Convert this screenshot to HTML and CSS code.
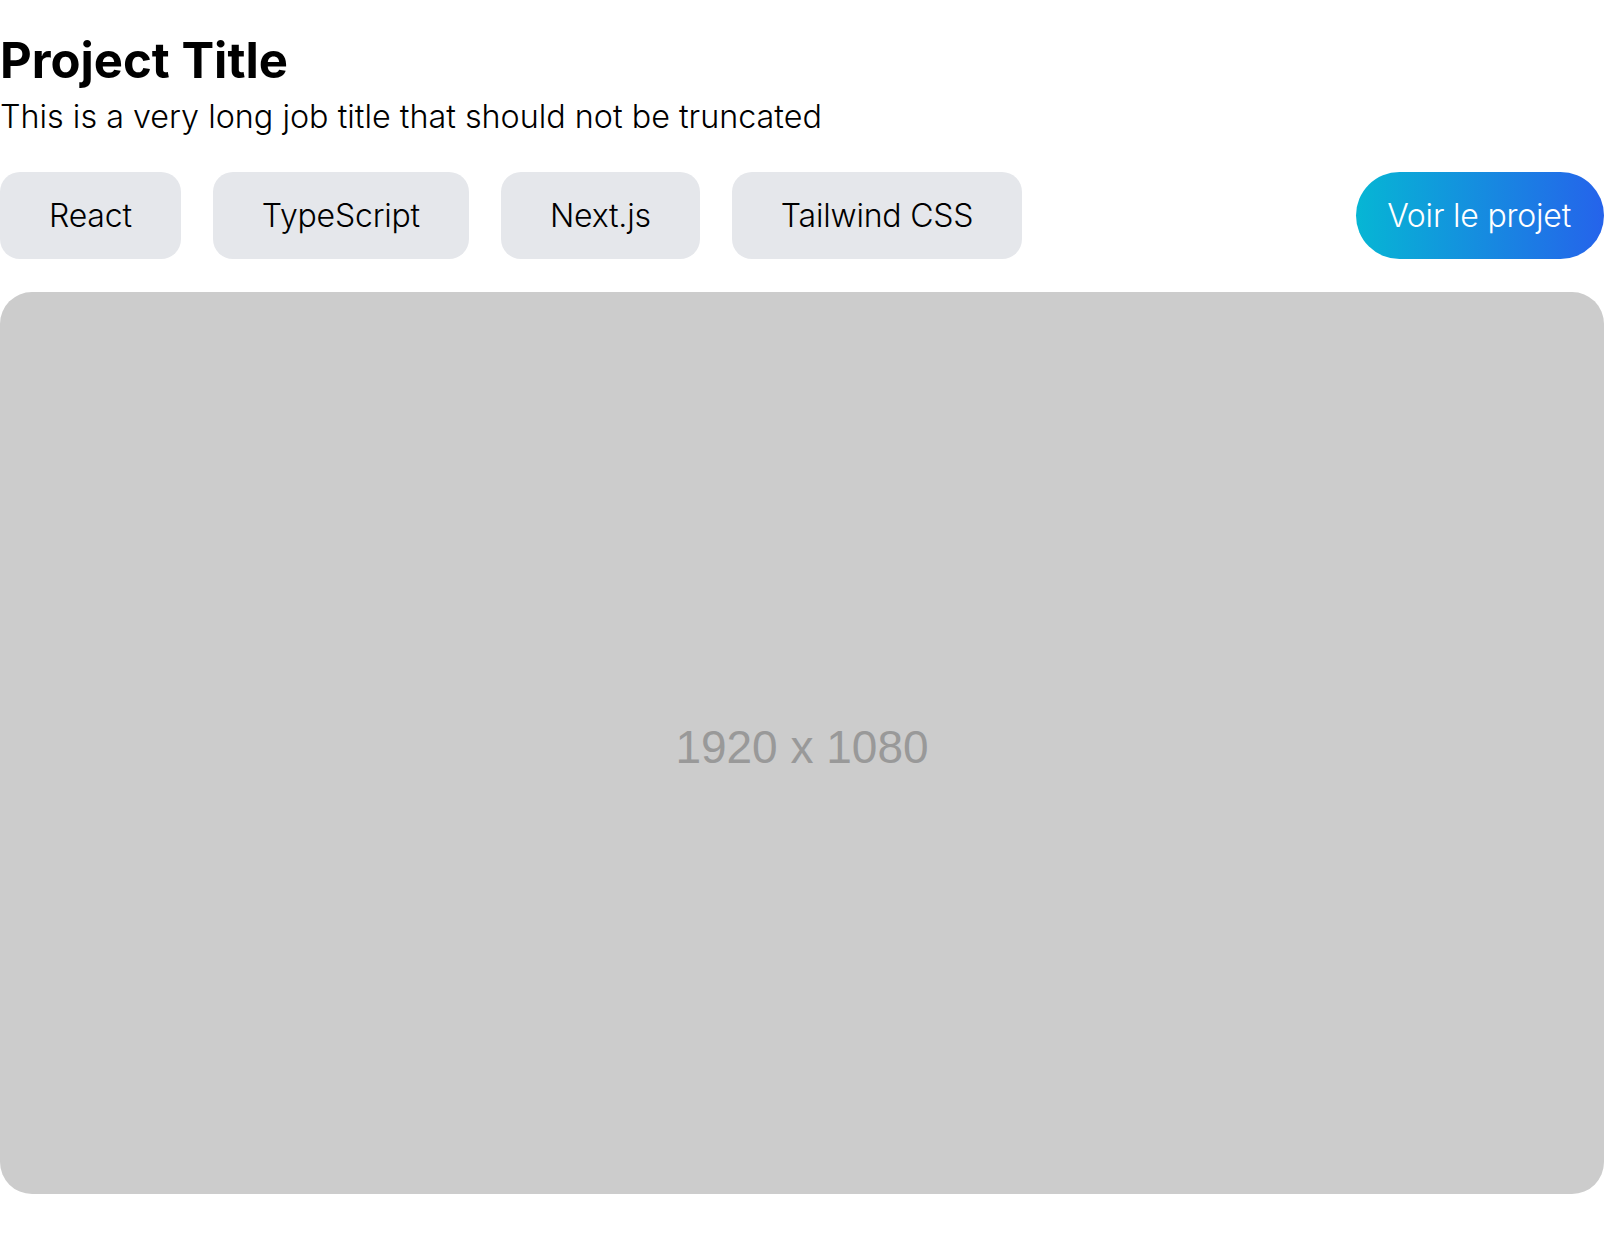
FILE: index.html
```html
<!DOCTYPE html>
<html lang="fr">
<head>
<meta charset="utf-8">
<title>Project Title</title>
<link rel="stylesheet" href="styles.css">
</head>
<body>
<main class="project">
  <header class="project-header">
    <h1 class="project-title">Project Title</h1>
    <p class="project-subtitle">This is a very long job title that should not be truncated</p>
  </header>
  <div class="project-bar">
    <ul class="tags">
      <li class="tag">React</li>
      <li class="tag">TypeScript</li>
      <li class="tag">Next.js</li>
      <li class="tag">Tailwind CSS</li>
    </ul>
    <a class="project-link" href="#">Voir le projet</a>
  </div>
  <div class="project-image"><span class="placeholder-text">1920 x 1080</span></div>
</main>
</body>
</html>
```
FILE: styles.css
```css
* { box-sizing: border-box; }
html, body { margin: 0; background: #fff; }
body {
  font-family: Inter, "Noto Sans", sans-serif;
  color: #000;
}
.project {
  padding-top: 31px;
  padding-bottom: 43px;
}
.project-header { margin: 0; }
.project-title {
  margin: 0;
  font-size: 49px;
  line-height: 60px;
  font-weight: 700;
}
.project-subtitle {
  margin: 5px 0 0;
  font-size: 32.3px;
  line-height: 42px;
  font-weight: 300;
}
.project-bar {
  display: flex;
  align-items: center;
  margin-top: 34px;
}
.tags {
  display: flex;
  gap: 32px;
  list-style: none;
  margin: 0;
  padding: 0;
}
.tag {
  display: flex;
  align-items: center;
  height: 87px;
  padding: 0 49px;
  background: #e5e7eb;
  border-radius: 20px;
  font-size: 32px;
  font-weight: 300;
  letter-spacing: -0.2px;
}
.project-link {
  margin-left: auto;
  display: flex;
  align-items: center;
  height: 87px;
  padding: 0 33px 0 31px;
  border-radius: 999px;
  background: linear-gradient(to right, #06b6d4, #2563eb);
  color: #fff;
  text-decoration: none;
  font-size: 32px;
  font-weight: 300;
  letter-spacing: -0.2px;
}
.project-image {
  margin-top: 33px;
  width: 100%;
  aspect-ratio: 16 / 9;
  background: #cccccc;
  border-radius: 32px;
  display: flex;
  align-items: center;
  justify-content: center;
  padding-top: 8px;
}
.placeholder-text {
  font-family: "Liberation Sans", Arial, sans-serif;
  font-size: 46px;
  color: #999999;
}
```
